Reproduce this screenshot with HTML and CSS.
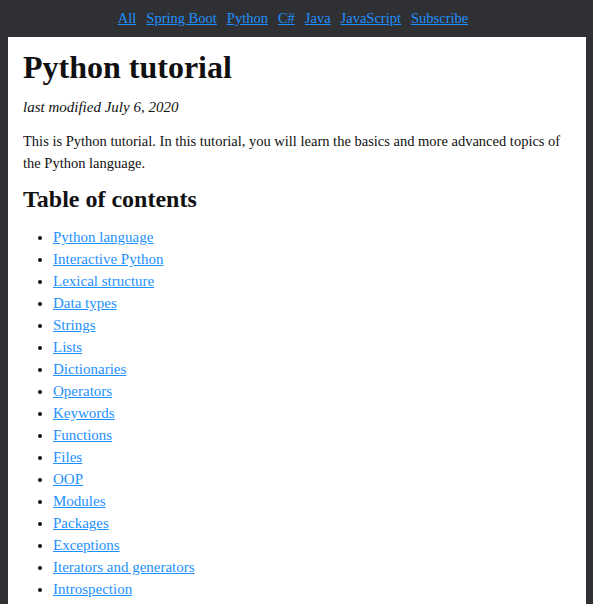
FILE: index.html
```html
<!DOCTYPE html>
<html>
<head>
<meta charset="utf-8">
<link rel="stylesheet" href="styles.css">
</head>
<body>
<nav class="topnav">
  <a href="#">All</a>
  <a href="#">Spring Boot</a>
  <a href="#">Python</a>
  <a href="#">C#</a>
  <a href="#">Java</a>
  <a href="#">JavaScript</a>
  <a href="#">Subscribe</a>
</nav>
<main class="content">
  <h1 class="title">Python tutorial</h1>
  <p class="modified">last modified July 6, 2020</p>
  <p class="intro">This is Python tutorial. In this tutorial, you will learn the basics and more advanced topics of the Python language.</p>
  <h2 class="toc-title">Table of contents</h2>
  <ul class="toc">
    <li><a href="#">Python language</a></li>
    <li><a href="#">Interactive Python</a></li>
    <li><a href="#">Lexical structure</a></li>
    <li><a href="#">Data types</a></li>
    <li><a href="#">Strings</a></li>
    <li><a href="#">Lists</a></li>
    <li><a href="#">Dictionaries</a></li>
    <li><a href="#">Operators</a></li>
    <li><a href="#">Keywords</a></li>
    <li><a href="#">Functions</a></li>
    <li><a href="#">Files</a></li>
    <li><a href="#">OOP</a></li>
    <li><a href="#">Modules</a></li>
    <li><a href="#">Packages</a></li>
    <li><a href="#">Exceptions</a></li>
    <li><a href="#">Iterators and generators</a></li>
    <li><a href="#">Introspection</a></li>
  </ul>
</main>
</body>
</html>
```

FILE: styles.css
```css
html, body {
  margin: 0;
  padding: 0;
}
body {
  background: #2f3034;
  font-family: "Liberation Serif", serif;
  font-size: 15px;
  line-height: 22px;
  color: #111;
  padding: 0 7px 0 8px;
  overflow: hidden;
}
.topnav {
  height: 36px;
  padding: 0 8px 1px 0;
  display: flex;
  justify-content: center;
  align-items: center;
  gap: 10px;
  font-size: 14.5px;
}
.topnav a {
  color: #1e90ff;
}
.content {
  background: #fff;
  padding: 10px 15px 20px 15px;
  min-height: 600px;
}
.title {
  font-size: 32px;
  line-height: 40px;
  margin: 0 0 9px 0;
}
.modified {
  font-style: italic;
  margin: 0 0 12px 0;
}
.intro {
  font-size: 14.5px;
  margin: 0 0 11px 0;
}
.toc-title {
  font-size: 24px;
  line-height: 28px;
  margin: 0 0 13px 0;
}
.toc {
  margin: 0;
  padding-left: 30px;
}
.toc a {
  color: #1e90ff;
}
```
